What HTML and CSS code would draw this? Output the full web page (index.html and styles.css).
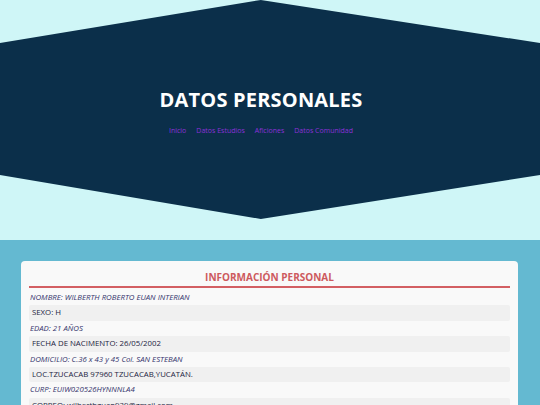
FILE: index.html
```html
<!DOCTYPE html>
<html lang="es">
<head>
<meta charset="utf-8">
<title>Datos Personales</title>
<link rel="stylesheet" href="styles.css">
</head>
<body>
<header class="top">
  <div class="hex">
    <h1 class="title">DATOS PERSONALES</h1>
    <nav class="nav">
      <a href="#">Inicio</a>
      <a href="#">Datos Estudios</a>
      <a href="#">Aficiones</a>
      <a href="#">Datos Comunidad</a>
    </nav>
  </div>
</header>
<main class="main">
  <section class="card">
    <h2 class="card-title">INFORMACIÓN PERSONAL</h2>
    <ul class="rows">
      <li class="row odd">NOMBRE: WILBERTH ROBERTO EUAN INTERIAN</li>
      <li class="row even">SEXO: H</li>
      <li class="row odd">EDAD: 21 AÑOS</li>
      <li class="row even">FECHA DE NACIMENTO: 26/05/2002</li>
      <li class="row odd">DOMICILIO: C.36 x 43 y 45 Col. SAN ESTEBAN</li>
      <li class="row even">LOC.TZUCACAB 97960 TZUCACAB,YUCATÁN.</li>
      <li class="row odd">CURP: EUIW020526HYNNNLA4</li>
      <li class="row even">CORREO: wilberthguan939@gmail.com</li>
    </ul>
  </section>
</main>
</body>
</html>
```

FILE: styles.css
```css
* { box-sizing: border-box; }
html, body { margin: 0; padding: 0; }
body {
  font-family: "Open Sans", "DejaVu Sans", sans-serif;
  background: #64b9d1;
  overflow: hidden;
}
.top {
  background: #cff6f7;
  height: 240px;
}
.hex {
  height: 219px;
  background: #0b2f4a;
  clip-path: polygon(48.3% 0, 100% 43px, 100% 175px, 48.3% 100%, 0 175px, 0 43px);
  display: flex;
  flex-direction: column;
  align-items: center;
  padding-top: 88px;
  padding-right: 18px;
}
.title {
  margin: 0;
  color: #ffffff;
  font-size: 20px;
  font-weight: 700;
  line-height: 24px;
  letter-spacing: 0.2px;
}
.nav {
  margin-top: 14px;
  display: flex;
  gap: 10px;
}
.nav a {
  color: #8b2fd9;
  text-decoration: none;
  font-size: 7px;
  line-height: 10px;
}
.main {
  padding: 21px 22px 0 21px;
}
.card {
  background: #f9f9f9;
  border-radius: 4px;
  padding: 9px 8px 10px 8px;
}
.card-title {
  margin: 0;
  text-align: center;
  color: #cd5a5e;
  font-size: 10px;
  font-weight: 700;
  line-height: 15px;
  padding-bottom: 1px;
  border-bottom: 2px solid #d35f63;
}
.rows {
  list-style: none;
  margin: 0;
  padding: 2px 0 0;
}
.row {
  font-size: 7.8px;
  line-height: 15.4px;
  height: 15.4px;
  white-space: nowrap;
}
.row.odd {
  font-style: italic;
  color: #35356d;
  padding-left: 1px;
}
.row.even {
  background: #f0f0f0;
  color: #23233f;
  padding-left: 3px;
  border-radius: 2px;
}
```
